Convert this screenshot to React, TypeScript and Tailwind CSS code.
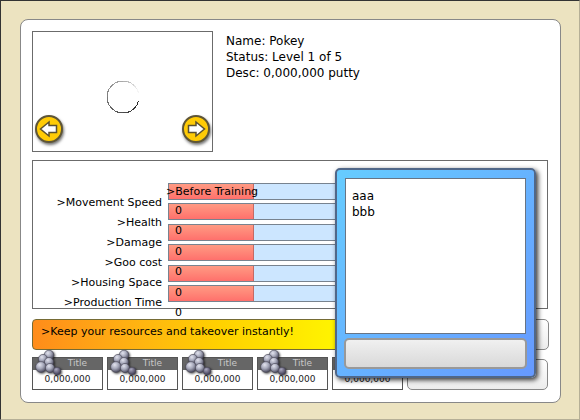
import React, { useState } from "react";

const stats = [
  "Movement Speed",
  "Health",
  "Damage",
  "Goo cost",
  "Housing Space",
  "Production Time",
];
const resources = [1, 2, 3, 4, 5];

const spinnerSegments = Array.from({ length: 22 }, (_, i) => {
  const a = ((15 + i * 15) * Math.PI) / 180;
  const b = ((31 + i * 15) * Math.PI) / 180;
  const shade = i < 17 ? 40 + i * 8 : Math.min(245, 176 + (i - 17) * 18);
  return {
    d: `M${17 + 16 * Math.cos(a)} ${17 + 16 * Math.sin(a)}A16 16 0 0 1 ${17 + 16 * Math.cos(b)} ${17 + 16 * Math.sin(b)}`,
    stroke: `rgb(${shade},${shade},${shade})`,
  };
});

function Spinner() {
  return (
    <svg width="34" height="34" viewBox="0 0 34 34" fill="none" shapeRendering="crispEdges" aria-label="Loading">
      {spinnerSegments.map((s) => (
        <path key={s.d} d={s.d} stroke={s.stroke} />
      ))}
    </svg>
  );
}

function ArrowButton({ dir }: { dir: "left" | "right" }) {
  return (
    <button
      type="button"
      aria-label={dir === "left" ? "Previous" : "Next"}
      className="size-7 rounded-full border-2 border-[#5e5536] bg-[#ffcb05] shadow-[1px_2px_3px_rgba(0,0,0,0.55)]"
    >
      <svg width="24" height="24" viewBox="0 0 24 24" className={dir === "right" ? "rotate-180" : ""}>
        <path d="M3.500 12L12 5V8.500H19.500V15.500H12V19Z" fill="#fff" stroke="#5a5030" strokeWidth="1.500" />
      </svg>
    </button>
  );
}

function Pebbles() {
  const stones = [
    [16, 5, 4.8],
    [10, 9, 4.6],
    [16, 12, 4.6],
    [8, 17, 5.4],
    [17, 18, 4.6],
    [24, 21, 3.8],
  ];
  return (
    <svg width="30" height="26" viewBox="0 0 30 26" className="absolute -top-2 left-0 drop-shadow-[1px_1px_1px_rgba(0,0,0,0.7)]">
      <defs>
        <radialGradient id="stone" cx="0.38" cy="0.3" r="0.7">
          <stop offset="0" stopColor="#e2e3ee" />
          <stop offset="0.5" stopColor="#a6a8ba" />
          <stop offset="1" stopColor="#4c4b5e" />
        </radialGradient>
        <radialGradient id="stone-dark" cx="0.38" cy="0.3" r="0.7">
          <stop offset="0" stopColor="#aaa8c0" />
          <stop offset="1" stopColor="#3e3a52" />
        </radialGradient>
      </defs>
      {stones.map(([x, y, r]) => (
        <circle
          key={`${x}-${y}`}
          cx={x}
          cy={y}
          r={r}
          fill={x > 20 ? "url(#stone-dark)" : "url(#stone)"}
          stroke="#484756"
          strokeWidth="0.600"
        />
      ))}
    </svg>
  );
}

function ResourceCard() {
  return (
    <div className="relative h-[33px] w-[71px] border border-[#555] bg-white text-[9px]">
      <div className="flex h-3 items-center justify-center bg-[#666] pl-5 text-[#c8c8c8]">Title</div>
      <div className="text-center leading-[18px] text-[#222]">0,000,000</div>
      <Pebbles />
    </div>
  );
}

export default function App() {
  const [text, setText] = useState("aaa\nbbb");
  return (
    <div className="relative min-h-screen border border-t-[#333] border-r-[#b5af96] border-b-[#b5af96] border-l-[#333] bg-[#ece3c0] pt-[18px] pr-[18px] pb-4 pl-[19px] font-['DejaVu_Sans',Verdana,sans-serif] text-black">
      <main className="rounded-lg border border-[#888] bg-white px-[11px] pt-[11px] pb-3">
        <section className="flex gap-3">
          <div className="flex h-[121px] w-[181px] flex-col justify-end border border-[#6b6b6b]">
            <div className="flex flex-1 items-end justify-center pb-px">
              <Spinner />
            </div>
            <div className="flex items-center justify-between px-[2px] pb-2">
              <ArrowButton dir="left" />
              <ArrowButton dir="right" />
            </div>
          </div>
          <div className="pt-[2px] pl-px text-xs leading-[16px]">
            <p>Name: Pokey</p>
            <p>Status: Level 1 of 5</p>
            <p>Desc: 0,000,000 putty</p>
          </div>
        </section>

        <section className="mt-2 mr-px flex h-[149px] gap-[6px] border border-[#6b6b6b] pt-[22px] text-[11px] leading-[14px]">
          <ul className="mt-[13px] flex h-[114px] w-[129px] flex-col justify-between text-right whitespace-nowrap">
            {stats.map((s) => (
              <li key={s}>&gt;{s}</li>
            ))}
          </ul>
          <div className="grid flex-1">
            <div className="col-start-1 row-start-1 mr-5 flex h-[119px] flex-col justify-between">
              {stats.map((s) => (
                <div key={s} className="h-[17px] border border-[#78838f] bg-[#cce6ff]">
                  <div className="h-full w-[85px] border-r border-[#c46a64] bg-linear-to-b from-[#ff9a83] to-[#ff706c]" />
                </div>
              ))}
            </div>
            <div className="z-10 col-start-1 row-start-1">
              <h2 className="-ml-[2px] pt-[2px] leading-[14px]">&gt;Before Training</h2>
              <ul className="mt-[5px] ml-[7px] flex h-[116px] flex-col justify-between">
                {stats.map((s) => (
                  <li key={s}>0</li>
                ))}
              </ul>
            </div>
          </div>
        </section>

        <section className="mt-[10px] flex h-[31px]">
          <p className="w-[370px] rounded-l-sm border border-[#756b35] bg-linear-to-r from-[#ff8c1a] via-[#ffd000] via-50% to-[#fff200] to-80% pl-2 text-[11px] leading-[23px]">
            &gt;Keep your resources and takeover instantly!
          </p>
          <button type="button" aria-label="Take over" className="flex-1 rounded-[5px] border border-[#888] bg-linear-to-b from-white to-[#ececec]" />
        </section>

        <section className="mt-[7px] mr-px flex gap-1">
          {resources.map((r) => (
            <ResourceCard key={r} />
          ))}
          <button type="button" aria-label="Confirm" className="mt-[2px] flex-1 rounded-[5px] border border-[#888] bg-linear-to-b from-white to-[#ececec]" />
        </section>
      </main>

      <div
        role="dialog"
        aria-label="Message"
        className="absolute top-[167px] right-[43px] z-20 flex w-[201px] flex-col gap-1 rounded-[5px] border-2 border-[#506788] bg-linear-to-br from-[#66ccff] to-[#6699ff] px-[7px] pt-2 pb-[7px] shadow-[2px_2px_5px_rgba(0,0,0,0.8)]"
      >
        <textarea
          aria-label="Message text"
          value={text}
          onChange={(e) => setText(e.target.value)}
          className="mx-px block h-[156px] resize-none border border-[#687484] bg-white px-[6px] pt-[9px] text-xs leading-[16px] outline-none"
        />
        <button type="button" aria-label="OK" className="h-[31px] rounded-[5px] border-2 border-[#999] bg-linear-to-b from-[#f0f0f0] to-[#d9d9d9]" />
      </div>
    </div>
  );
}
